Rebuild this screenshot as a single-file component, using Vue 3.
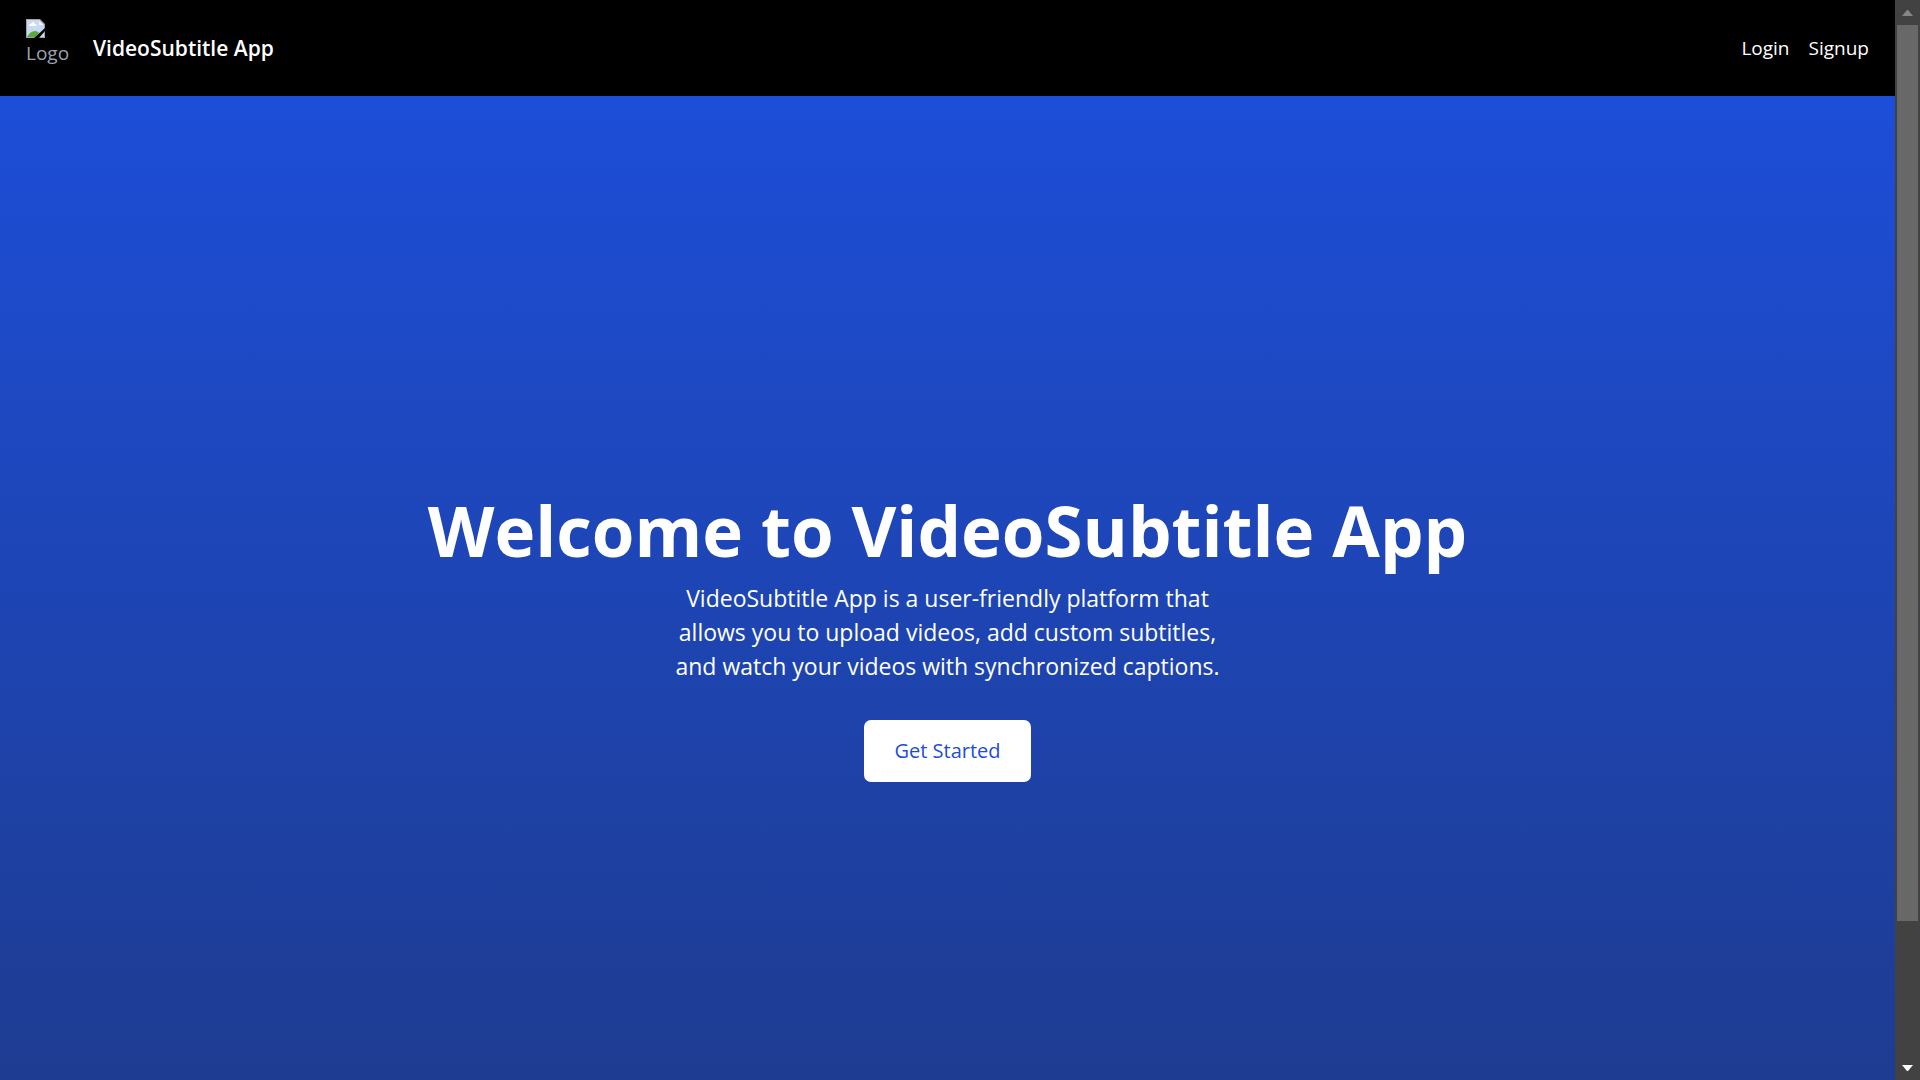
<script setup>
const links = ['Login', 'Signup']
</script>

<template>
  <div class="window">
    <div class="page">
      <header class="bar">
        <a class="brand" href="#">
          <span class="logo">
            <svg width="19" height="19" viewBox="0 0 19 19" aria-hidden="true">
              <path d="M0 0H14L19 5V19H0Z" fill="#a3a3a3" />
              <path d="M1 1H13V6H18V18H1Z" fill="#c6d8f5" />
              <path d="M13 1L18 6H13Z" fill="#f2f2f2" />
              <path d="M3 7C3 5 5 5 5 5C6 2 9 3 9 5C11 5 11 7 10 7Z" fill="#fff" />
              <path d="M1 18C3 14 6 12 9 12C11 12 12 13 13 14L9 18Z" fill="#57ab36" />
              <path d="M19 9V12L13 19H8Z" fill="#000" />
            </svg>
            <span class="alt">Logo</span>
          </span>
          <span class="name">VideoSubtitle App</span>
        </a>
        <nav class="links">
          <a v-for="link in links" :key="link" href="#">{{ link }}</a>
        </nav>
      </header>
      <main class="hero">
        <h1>Welcome to VideoSubtitle App</h1>
        <p>
          VideoSubtitle App is a user-friendly platform that<br />
          allows you to upload videos, add custom subtitles,<br />
          and watch your videos with synchronized captions.
        </p>
        <button type="button">Get Started</button>
      </main>
    </div>
    <div class="scrollbar" aria-hidden="true">
      <svg class="arrow" width="11" height="6" viewBox="0 0 11 6"><path d="M5 0H6L11 6H0Z" fill="#868686" /></svg>
      <div class="track"><div class="thumb"></div></div>
      <svg class="arrow" width="11" height="6" viewBox="0 0 11 6"><path d="M0 0H11L6 6H5Z" fill="#fff" /></svg>
    </div>
  </div>
</template>

<style>
body {
  margin: 0;
}
</style>

<style scoped>
.window {
  display: flex;
  height: 100vh;
  overflow: hidden;
  font-family: "Segoe UI", "Open Sans", "Noto Sans", sans-serif;
  color: #fff;
}
.page {
  flex: 1;
  min-width: 0;
}
.bar {
  box-sizing: border-box;
  height: 96px;
  padding: 0 26px;
  display: flex;
  align-items: center;
  justify-content: space-between;
  background: #000;
}
a {
  color: inherit;
  text-decoration: none;
}
.brand {
  display: flex;
  align-items: center;
}
.logo {
  display: flex;
  flex-direction: column;
  width: 48px;
  height: 58px;
  margin-right: 19px;
}
.alt {
  font-size: 19px;
  line-height: 31px;
  color: #9ca3af;
}
.name {
  font-size: 21px;
  line-height: 34px;
  font-weight: 600;
}
.links {
  display: flex;
  gap: 19px;
  font-size: 19px;
  line-height: 31px;
}
.hero {
  height: 100vh;
  display: flex;
  flex-direction: column;
  align-items: center;
  justify-content: center;
  text-align: center;
  background: linear-gradient(#1d4ed8, #1e3a8a);
}
h1 {
  margin: 0 0 11px;
  font-size: 69px;
  line-height: 80px;
  font-weight: 700;
}
p {
  margin: 0 0 37px;
  font-size: 23px;
  line-height: 34px;
}
button {
  padding: 14px 30px;
  border: 0;
  border-radius: 7px;
  background: #fff;
  color: #1d4ed8;
  font: inherit;
  font-size: 20px;
  line-height: 34px;
}
.scrollbar {
  width: 25px;
  display: flex;
  flex-direction: column;
  align-items: center;
  background: #424242;
}
.arrow {
  margin: 10px 0 9px;
}
.track {
  flex: 1;
}
.thumb {
  width: 21px;
  height: 87%;
  background: #686868;
}
</style>
